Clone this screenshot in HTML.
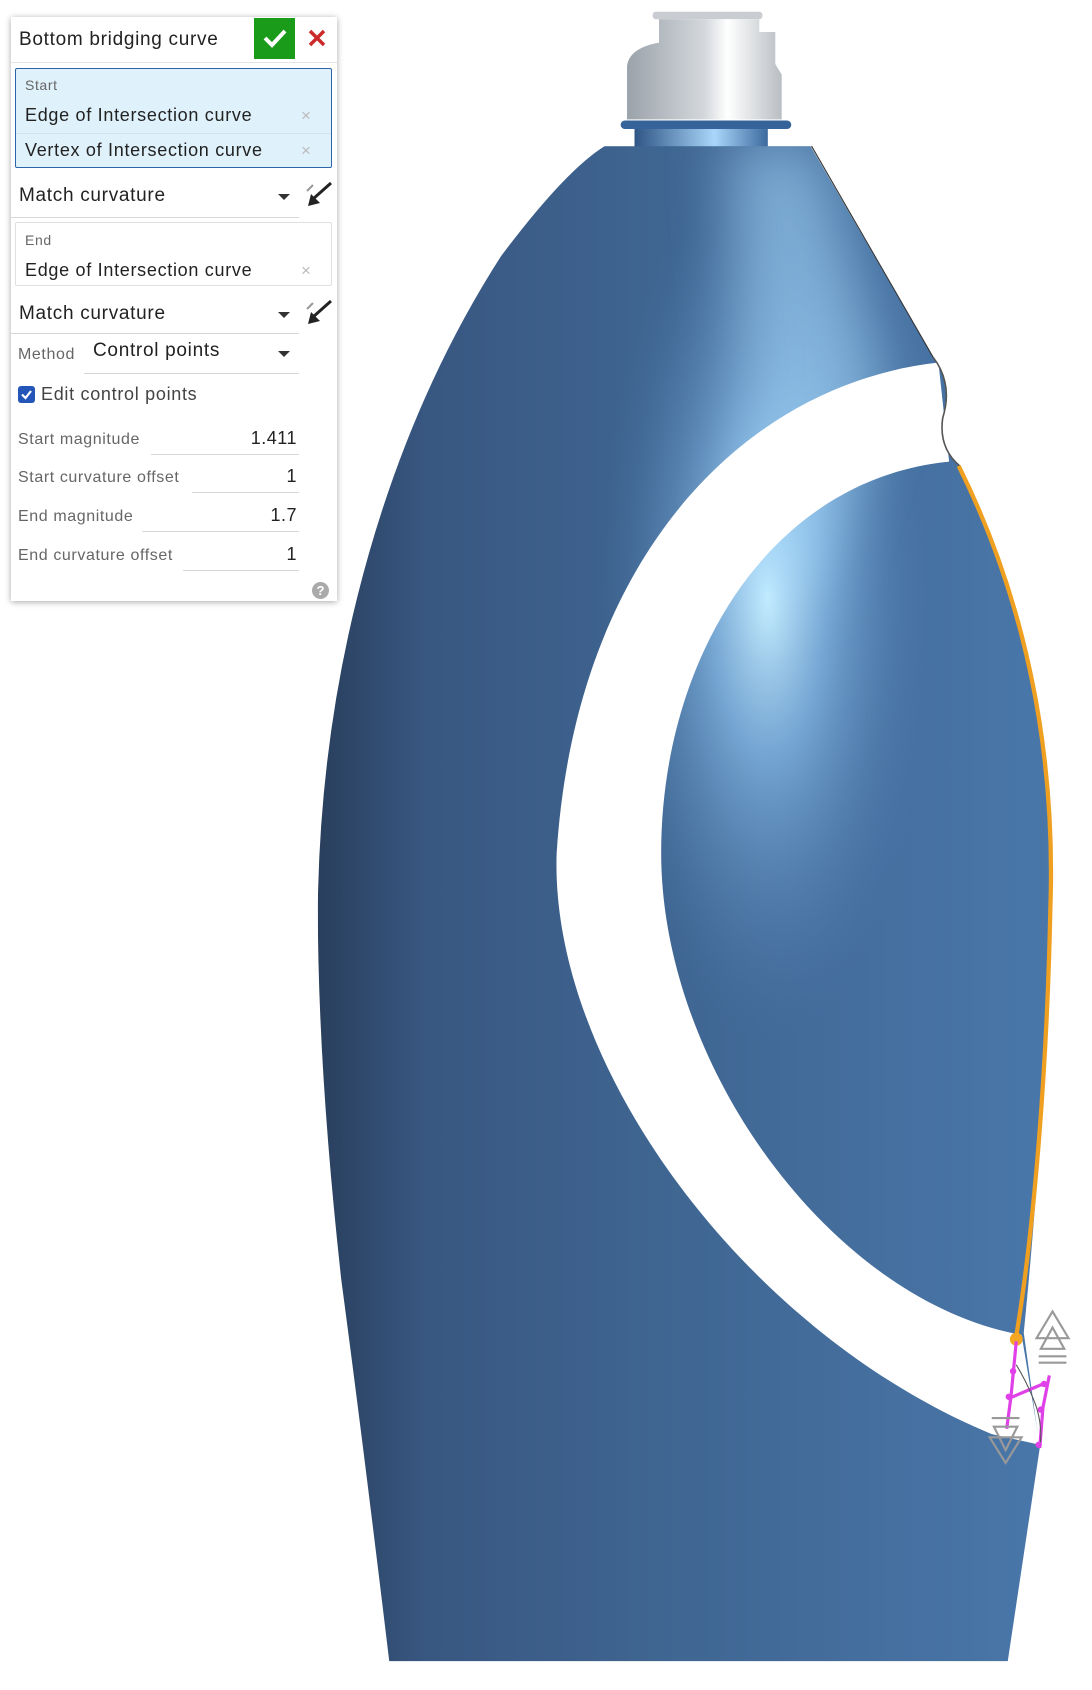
<!DOCTYPE html>
<html><head><meta charset="utf-8"><style>
html,body{margin:0;padding:0;background:#fff;}
body{width:1092px;height:1690px;position:relative;overflow:hidden;font-family:"Liberation Sans",sans-serif;}
svg.bot{position:absolute;left:0;top:0;}
.panel{position:absolute;left:11px;top:17px;width:326px;height:584px;background:#fff;box-shadow:0 1px 6px rgba(0,0,0,.35);}
.t{position:absolute;white-space:nowrap;color:#222;letter-spacing:0.7px;}
.lab{position:absolute;color:#666;font-size:16px;white-space:nowrap;letter-spacing:0.6px;}
.ul{position:absolute;height:1px;background:#d8d8d8;}
.x{position:absolute;color:#bbb;font-size:17px;}
.dd{position:absolute;width:0;height:0;border-left:6px solid transparent;border-right:6px solid transparent;border-top:6px solid #333;}
.num{position:absolute;font-size:18px;color:#222;text-align:right;letter-spacing:0.5px;}
</style></head><body>
<svg class="bot" width="1092" height="1690" viewBox="0 0 1024 1585" preserveAspectRatio="none">
<defs>
<linearGradient id="bg" x1="0" x2="1" y1="0" y2="0">
<stop offset="0" stop-color="#283d5a"/><stop offset="0.15" stop-color="#385781"/><stop offset="0.45" stop-color="#3f6591"/><stop offset="1" stop-color="#4a78ab"/>
</linearGradient>
<radialGradient id="hl" cx="720" cy="560" r="260" gradientUnits="userSpaceOnUse" gradientTransform="translate(720 560) scale(0.6 1.6) translate(-720 -560)">
<stop offset="0" stop-color="#c8efff" stop-opacity="1"/><stop offset="0.35" stop-color="#8cc0ec" stop-opacity="0.7"/><stop offset="1" stop-color="#4a78ab" stop-opacity="0"/>
</radialGradient>
<filter id="bl" x="-50%" y="-50%" width="200%" height="200%"><feGaussianBlur stdDeviation="28"/></filter>
<linearGradient id="cap" x1="0" x2="1"><stop offset="0" stop-color="#9aa2aa"/><stop offset="0.5" stop-color="#d4d8dc"/><stop offset="0.65" stop-color="#ffffff"/><stop offset="1" stop-color="#b9bec3"/></linearGradient>
<linearGradient id="neck" x1="0" x2="1"><stop offset="0" stop-color="#2f5585"/><stop offset="0.6" stop-color="#a9d6fa"/><stop offset="1" stop-color="#3c6a9e"/></linearGradient>
<clipPath id="bc"><path d="M567 137 L760 137 L875 335 Q894 360 884 392 Q880 420 900 437 C960 560 990 700 985 850 C982 1000 970 1150 960 1250 L975 1358 L945 1558 L365 1558 Q340 1350 320 1200 Q298 1000 298 850 Q300 700 335 560 Q380 380 470 240 Q530 160 567 137 Z"/></clipPath>
</defs>
<!-- cap -->
<rect x="612" y="11" width="103" height="7" rx="3" fill="#c9cdd1"/>
<path d="M618 18 H712 L712 30 L727 30 L727 60 L733 70 V112 H588 V62 Q590 45 618 40 Z" fill="url(#cap)"/>
<rect x="582" y="113" width="160" height="8" rx="4" fill="#35639a"/>
<rect x="595" y="121" width="125" height="17" fill="url(#neck)"/>
<!-- body -->
<g clip-path="url(#bc)">
<rect x="290" y="130" width="720" height="1440" fill="url(#bg)"/>
<rect x="290" y="130" width="720" height="1440" fill="url(#hl)"/>
<path d="M680 130 L770 130 L830 360 L760 560 L690 560 L700 360 Z" fill="#a8dcff" opacity=".55" filter="url(#bl)"/>
</g>
<!-- white band -->
<path d="M880 340 C700 360 540 520 522 800 C515 1000 700 1250 930 1345 L975 1355 L958 1252 C780 1220 620 1000 620 800 C620 620 720 450 890 433 Z" fill="#fff"/>
<path d="M875 335 Q894 360 884 392 Q880 420 900 437 L1000 437 L1000 335 Z" fill="#fff"/>
<path d="M875 335 Q894 360 884 392 Q880 420 900 437" fill="none" stroke="#555" stroke-width="1.5"/>
<path d="M761 137 L875 335" stroke="#333" stroke-width="1"/>
<!-- orange edge -->
<path d="M899 437 C960 560 990 700 985 850 C982 1000 970 1150 953 1253" fill="none" stroke="#f0a020" stroke-width="4"/>
<circle cx="953" cy="1256" r="6" fill="#f5a623"/>
<!-- control points -->
<g stroke="#e040e8" stroke-width="3" fill="none">
<path d="M953 1258 L948 1310 L944 1340"/><path d="M984 1290 L978 1320 L975 1358"/><path d="M945 1312 L978 1298"/>
</g>
<path d="M953 1280 Q965 1300 972 1320 Q978 1340 975 1358" fill="none" stroke="#555" stroke-width="1"/>
<g fill="#e040e8"><circle cx="950" cy="1286" r="3"/><circle cx="946" cy="1310" r="3"/><circle cx="979" cy="1298" r="3"/><circle cx="976" cy="1322" r="3"/><circle cx="974" cy="1355" r="3"/></g>
<g fill="none" stroke="#999" stroke-width="2">
<path d="M987 1230 L1002 1255 L972 1255 Z"/><path d="M987 1245 L998 1265 L976 1265 Z"/><path d="M974 1272 H1000 M974 1278 H1000"/>
<path d="M943 1372 L928 1348 L958 1348 Z"/><path d="M943 1360 L932 1338 L954 1338 Z"/><path d="M930 1330 H956"/>
</g>
</svg>

<div class="panel">
  <div class="t" style="left:8px;top:12px;font-size:19px;">Bottom bridging curve</div>
  <div style="position:absolute;left:243px;top:1px;width:41px;height:41px;background:#1a9c1a;"></div>
  <svg style="position:absolute;left:251px;top:10px" width="26" height="22" viewBox="0 0 26 22"><path d="M3 11 L10 18 L23 4" stroke="#fff" stroke-width="4" fill="none"/></svg>
  <svg style="position:absolute;left:297px;top:12px" width="18" height="18" viewBox="0 0 18 18"><path d="M2 2 L16 16 M16 2 L2 16" stroke="#cc2a2a" stroke-width="3.5"/></svg>
  <div style="position:absolute;left:0;top:45px;width:326px;height:1px;background:#e4e4e4"></div>
  <div style="position:absolute;left:4px;top:51px;width:315px;height:98px;background:#dff1fb;border:1px solid #2e64a8;border-radius:2px;"></div>
  <div style="position:absolute;left:5px;top:116px;width:315px;height:1px;background:#cfe4f0"></div>
  <div class="lab" style="left:14px;top:60px;font-size:14px;">Start</div>
  <div class="t" style="left:14px;top:88px;font-size:18px;">Edge of Intersection curve</div>
  <div class="t" style="left:14px;top:123px;font-size:18px;">Vertex of Intersection curve</div>
  <div class="x" style="left:290px;top:89px;">×</div>
  <div class="x" style="left:290px;top:124px;">×</div>
  <div class="t" style="left:8px;top:168px;font-size:19px;">Match curvature</div>
  <div class="dd" style="left:267px;top:177px"></div>
  <div class="ul" style="left:0;top:200px;width:288px;"></div>
  <svg style="position:absolute;left:294px;top:162px" width="30" height="30" viewBox="0 0 30 30"><path d="M26 4 L8 20" stroke="#222" stroke-width="3"/><path d="M3 27 L6 15 L15 24 Z" fill="#222"/><path d="M8 6 L2 12" stroke="#999" stroke-width="2"/></svg>
  <div style="position:absolute;left:4px;top:205px;width:315px;height:62px;background:#fff;border:1px solid #e0e0e0;border-radius:2px;"></div>
  <div class="lab" style="left:14px;top:215px;font-size:14px;">End</div>
  <div class="t" style="left:14px;top:243px;font-size:18px;">Edge of Intersection curve</div>
  <div class="x" style="left:290px;top:244px;">×</div>
  <div class="t" style="left:8px;top:286px;font-size:19px;">Match curvature</div>
  <div class="dd" style="left:267px;top:295px"></div>
  <div class="ul" style="left:0;top:316px;width:288px;"></div>
  <svg style="position:absolute;left:294px;top:280px" width="30" height="30" viewBox="0 0 30 30"><path d="M26 4 L8 20" stroke="#222" stroke-width="3"/><path d="M3 27 L6 15 L15 24 Z" fill="#222"/><path d="M8 6 L2 12" stroke="#999" stroke-width="2"/></svg>
  <div class="lab" style="left:7px;top:329px;">Method</div>
  <div class="t" style="left:82px;top:323px;font-size:19px;">Control points</div>
  <div class="dd" style="left:267px;top:334px"></div>
  <div class="ul" style="left:73px;top:356px;width:215px;"></div>
  <div style="position:absolute;left:7px;top:369px;width:17px;height:17px;background:#2455b8;border-radius:3px;"></div>
  <svg style="position:absolute;left:9px;top:371px" width="13" height="13" viewBox="0 0 13 13"><path d="M2 6.5 L5.5 10 L11 3" stroke="#fff" stroke-width="2.2" fill="none"/></svg>
  <div class="t" style="left:30px;top:367px;font-size:18px;color:#444;">Edit control points</div>
  <div class="lab" style="left:7px;top:414px;">Start magnitude</div>
  <div class="num" style="left:174px;top:411px;width:112px;">1.411</div>
  <div class="ul" style="left:140px;top:437px;width:148px;"></div>
  <div class="lab" style="left:7px;top:452px;">Start curvature offset</div>
  <div class="num" style="left:174px;top:449px;width:112px;">1</div>
  <div class="ul" style="left:181px;top:475px;width:107px;"></div>
  <div class="lab" style="left:7px;top:491px;">End magnitude</div>
  <div class="num" style="left:174px;top:488px;width:112px;">1.7</div>
  <div class="ul" style="left:131px;top:514px;width:157px;"></div>
  <div class="lab" style="left:7px;top:530px;">End curvature offset</div>
  <div class="num" style="left:174px;top:527px;width:112px;">1</div>
  <div class="ul" style="left:172px;top:553px;width:116px;"></div>
  <div style="position:absolute;left:301px;top:565px;width:17px;height:17px;border-radius:50%;background:#aaa;color:#fff;font-size:13px;font-weight:bold;text-align:center;line-height:17px;">?</div>
</div>
</body></html>
